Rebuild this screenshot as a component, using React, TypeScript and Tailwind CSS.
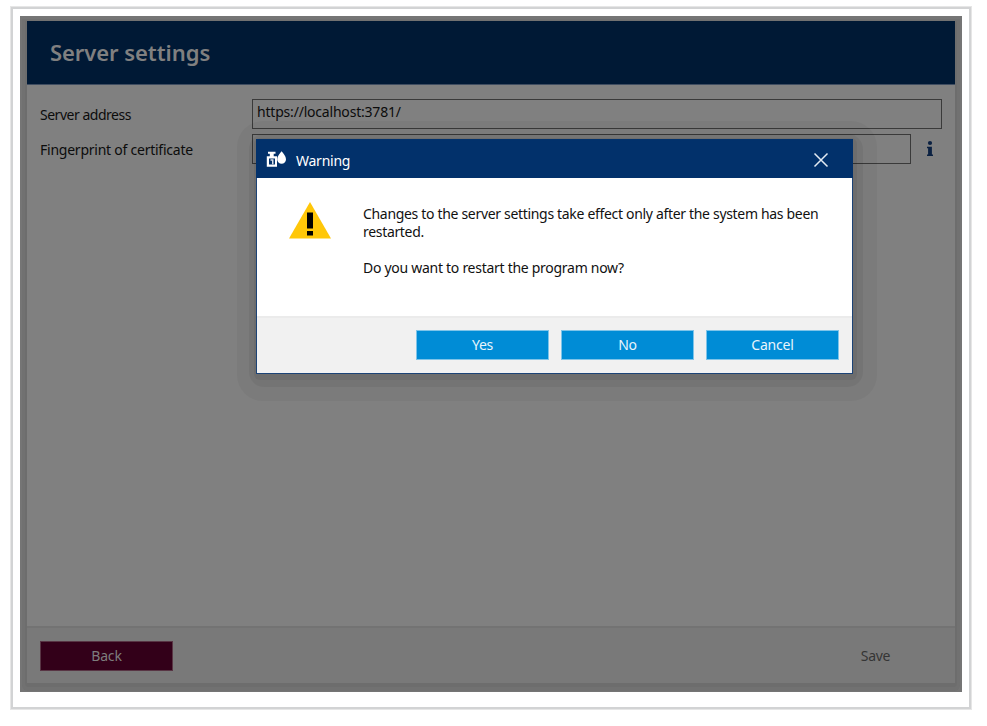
import type { ReactNode } from "react";

function Field({ label, value, wide }: { label: string; value?: string; wide?: boolean }) {
  return (
    <div className="flex h-[30px] items-center">
      <label
        className={`mt-px w-[212px] shrink-0 text-[14px] text-[#0c0c0c] ${
          wide ? "tracking-[-0.48px]" : "tracking-[-0.24px]"
        }`}
      >
        {label}
      </label>
      <div
        className={`h-[30px] border border-[#3a3a3a] pl-[4px] text-[14px] leading-[24px] tracking-[-0.2px] text-[#0c0c0c] ${
          wide ? "w-[690px]" : "w-[659px]"
        }`}
      >
        {value}
      </div>
      {!wide && (
        <svg className="ml-[14px]" width="10" height="18" viewBox="0 0 10 18" fill="#0b2142">
          <circle cx="5" cy="3" r="2.1" />
          <path d="M2 6.8h4.9v7.7H8V16H2v-1.5h1.1V8.3H2z" />
        </svg>
      )}
    </div>
  );
}

function DialogButton({ children }: { children: ReactNode }) {
  return (
    <button className="h-[30px] w-[133px] border border-[#7fc4e9] bg-[#008cd6] text-[14px] leading-[28px] tracking-[-0.2px] text-[#e8f5fc]">
      {children}
    </button>
  );
}

// Bottle and drop used in the title bar
function AppIcon() {
  return (
    <svg width="22" height="17" viewBox="0 0 22 17" fill="#fff">
      <path fillRule="evenodd" d="M2 .8h7.5v2H7.7v2.4H11v10.5H.8V5.200H3.800V2.800H2zM3 7.500v6h6v-6z" />
      <path d="M4.500 8.300h3v5H6V9.800H4.500z" opacity="0.85" />
      <path d="M15.600.3c1.800 2.600 4.400 4.600 4.400 7.900a4.400 4.600 0 0 1-8.800 0c0-3.300 2.600-5.300 4.400-7.900z" />
    </svg>
  );
}

function WarningDialog() {
  return (
    <div className="absolute left-[236px] top-[123px]">
      {/* stepped drop shadow */}
      <div className="absolute -left-[19px] -top-[18px] h-[280px] w-[640px] rounded-[26px] bg-black/4" />
      <div className="absolute -left-[7px] -top-[5px] h-[253px] w-[614px] rounded-[15px] bg-black/5" />
      <div className="absolute -left-[2px] -top-[1px] h-[242px] w-[603px] rounded-[6px] bg-black/6" />

      <div className="relative flex h-[235px] w-[597px] flex-col border border-[#1c4376] bg-white">
        <div className="-mx-px -mt-px flex h-[39px] shrink-0 items-center bg-[#02316b] pl-[10px] pr-[24px] pt-px text-white">
          <AppIcon />
          <span className="ml-[8px] mt-[2px] text-[14px] tracking-[-0.25px]">Warning</span>
          <svg className="ml-auto mt-[2px]" width="16" height="16" viewBox="0 0 16 16" stroke="#e4ebf3" strokeWidth="1.5">
            <path d="M1.500 1.500l13 13M14.500 1.500l-13 13" />
          </svg>
        </div>

        <div className="flex flex-1 pl-[32px] pt-[24px]">
          <svg width="42" height="37" viewBox="0 0 42 37" className="shrink-0">
            <path d="M21 0l21 36.500H0z" fill="#ffc709" />
            <path d="M18 10.500h6v16h-6zM18 29h6v4.500h-6z" fill="#000" />
          </svg>
          <div className="ml-[32px] mt-[3px] whitespace-nowrap text-[14px] leading-[18px] tracking-[-0.32px] text-[#111]">
            <p>
              Changes to the server settings take effect only after the system has been
              <br />
              restarted.
            </p>
            <p className="mt-[18px] tracking-[-0.28px]">Do you want to restart the program now?</p>
          </div>
        </div>

        <div className="flex h-[57px] shrink-0 justify-end gap-[12px] border-t-2 border-[#ebebeb] bg-[#f1f1f1] pr-[13px] pt-[12px]">
          <DialogButton>Yes</DialogButton>
          <DialogButton>No</DialogButton>
          <DialogButton>Cancel</DialogButton>
        </div>
      </div>
    </div>
  );
}

export default function App() {
  return (
    <div className="h-[726px] w-[987px] bg-white pl-[10px] pt-[6px] font-['Noto_Sans','Open_Sans',sans-serif]">
      {/* picture frame: light outer line, darker inner one */}
      <div className="h-[704px] w-[962px] border border-[#e6e6e6]">
        <div className="h-[702px] w-[960px] border-2 border-[#d2d3d4] pl-[7px] pt-[7px]">
          <div className="relative h-[676px] w-[942px] bg-[#757575] pl-[7px] pt-[5px]">
            <div className="flex h-[662px] w-[928px] flex-col rounded-b-[2px] bg-[#808080] shadow-[0_2px_0_2px_#6d6d6d,0_3px_0_5px_#717171]">
              <header className="flex h-[64px] shrink-0 items-center border-b border-[#3f4d61] bg-[#001935] pl-[23px]">
                <h1 className="text-[22px] font-semibold tracking-[-0.06px] text-[#808080]">Server settings</h1>
              </header>

              <main className="flex flex-1 flex-col gap-[5px] pl-[13px] pt-[14px]">
                <Field label="Server address" value="https://localhost:3781/" wide />
                <Field label="Fingerprint of certificate" />
              </main>

              <footer className="flex h-[57px] shrink-0 items-start justify-between border-t-2 border-[#737373] bg-[#797979] px-[13px] pt-[13px]">
                <button className="h-[30px] w-[133px] border border-[#583544] bg-[#330019] text-[14px] leading-[28px] tracking-[-0.2px] text-[#7d7d7d]">
                  Back
                </button>
                <button className="h-[30px] w-[133px] text-[14px] leading-[30px] tracking-[-0.3px] text-[#353535]">Save</button>
              </footer>
            </div>

            <WarningDialog />
          </div>
        </div>
      </div>
    </div>
  );
}
